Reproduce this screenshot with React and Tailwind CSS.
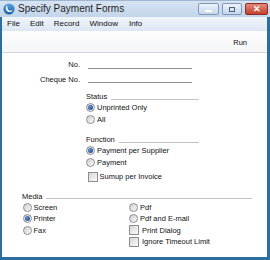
import React from "react";

const F = "font-['Liberation_Sans',Arial,sans-serif]";

function Radio({ checked }) {
  return (
    <span className="w-[9px] h-[9px] rounded-full border border-[#8e8e8e] bg-[linear-gradient(135deg,#cfcfcf,#fafafa)] flex items-center justify-center shrink-0">
      {checked && <span className="w-[5px] h-[5px] rounded-full bg-[radial-gradient(circle_at_35%_35%,#5d8fd0,#123f80)]" />}
    </span>
  );
}

function Check() {
  return (
    <span className="w-[10px] h-[10px] border border-[#8e8e8e] bg-[linear-gradient(135deg,#d6d6d6,#fbfbfb)] shrink-0" />
  );
}

function Opt({ checked, label }) {
  return (
    <div className="h-[11.5px] flex items-center gap-[2px]">
      <Radio checked={checked} />
      <span className="text-[7.5px] leading-none text-[#111]">{label}</span>
    </div>
  );
}

function Chk({ label }) {
  return (
    <div className="h-[11.5px] flex items-center gap-[3px]">
      <Check />
      <span className="text-[7.5px] leading-none text-[#111]">{label}</span>
    </div>
  );
}

function Header({ label }) {
  return (
    <div className="h-[10px] flex items-center gap-[4px]">
      <span className="text-[7.5px] leading-none text-[#111]">{label}</span>
      <span className="flex-1 h-px bg-[#c4c4c4] mt-[4px]" />
    </div>
  );
}

function Field({ label, className = "" }) {
  return (
    <div className={"h-[11px] flex items-start " + className}>
      <span className="w-[78px] text-right text-[7.5px] leading-[11px] text-[#111]">{label}</span>
      <span className="ml-[8px] w-[104px] h-px bg-[#8f8f8f] mt-[8.5px]" />
    </div>
  );
}

export default function App() {
  return (
    <div className={"w-[270px] h-[260px] flex flex-col bg-white " + F}>
      {/* Title bar */}
      <div className="h-[17px] flex items-center bg-[linear-gradient(#d6e3f2,#c3d5ea)] border-t border-[#9fb6d2] relative">
        <svg className="ml-[3px] w-[12px] h-[12px]" viewBox="0 0 12 12">
          <defs>
            <linearGradient id="lg" x1="0" y1="0" x2="0" y2="1">
              <stop offset="0" stopColor="#5aa3e0" />
              <stop offset="1" stopColor="#1a5fa8" />
            </linearGradient>
          </defs>
          <circle cx="6" cy="6" r="5.6" fill="url(#lg)" />
          <path d="M4.2 2.2 C2.2 3.6 2.4 7.6 5.2 8.8 C7.2 9.6 9.2 8.6 9.8 7 C8.4 8 6.2 8 5.2 6.8 C4.2 5.6 4.2 3.6 4.2 2.2 Z" fill="#fff" />
        </svg>
        <span className="ml-[3px] text-[10px] leading-none text-[#1e1e1e]">Specify Payment Forms</span>
        <div className="ml-auto mr-[2px] flex items-start self-start mt-[2px] gap-[3px]">
          <div className="w-[21px] h-[12px] rounded-[2px] border border-[#7f98b8] bg-[linear-gradient(#eef3fa,#c5d6ec)] flex items-center justify-center">
            <span className="w-[7px] h-[2px] bg-[#4f5f78] border-[0.5px] border-white mt-[3px]" />
          </div>
          <div className="w-[20px] h-[12px] rounded-[2px] border border-[#7f98b8] bg-[linear-gradient(#eef3fa,#c5d6ec)] flex items-center justify-center">
            <span className="w-[6px] h-[5px] border-[1.5px] border-[#4f5f78]" />
          </div>
          <div className="w-[23px] h-[12px] rounded-[2px] border border-[#8a2c20] bg-[linear-gradient(#e5897a,#c4402f)] flex items-center justify-center">
            <span className="text-white text-[9px] font-bold leading-none">✕</span>
          </div>
        </div>
      </div>

      <div className="flex-1 flex flex-col border-l-2 border-r-[3px] border-b-[3px] border-[#2a6f9f]">
        {/* Menu bar */}
        <div className="h-[14px] flex items-center gap-[10px] pl-[5px] bg-[linear-gradient(#f1f5fb,#dde7f3)] text-[8px] leading-none text-[#111]">
          <span>File</span>
          <span>Edit</span>
          <span>Record</span>
          <span>Window</span>
          <span className="ml-[1px]">Info</span>
        </div>
        {/* Toolbar */}
        <div className="h-[22px] flex items-center justify-end pr-[20px] pt-[2px] bg-[linear-gradient(#fdfdfe,#f4f6f8)] border-b border-[#d3d6da]">
          <span className="text-[7.5px] leading-none text-[#111]">Run</span>
        </div>

        {/* Body */}
        <div className="flex-1 flex flex-col bg-white">
          <Field label="No." className="mt-[6px]" />
          <Field label="Cheque No." className="mt-[3.5px]" />

          <div className="ml-[84px] w-[113px] flex flex-col mt-[7.5px]">
            <Header label="Status" />
            <Opt checked label="Unprinted Only" />
            <Opt label="All" />
            <div className="mt-[10px]">
              <Header label="Function" />
            </div>
            <Opt checked label="Payment per Supplier" />
            <Opt label="Payment" />
            <div className="h-[12px] mt-[2.5px] flex items-center gap-[2px] pl-[1.5px]">
              <Check />
              <span className="text-[7.5px] leading-none text-[#111]">Sumup per Invoice</span>
            </div>
          </div>

          <div className="ml-[20px] w-[230px] flex flex-col mt-[9px]">
            <Header label="Media" />
            <div className="flex">
              <div className="w-[107px] flex flex-col pl-[0.5px]">
                <Opt label="Screen" />
                <Opt checked label="Printer" />
                <Opt label="Fax" />
              </div>
              <div className="flex flex-col">
                <Opt label="Pdf" />
                <Opt label="Pdf and E-mail" />
                <Chk label="Print Dialog" />
                <Chk label="Ignore Timeout Limit" />
              </div>
            </div>
          </div>
        </div>
      </div>
    </div>
  );
}
